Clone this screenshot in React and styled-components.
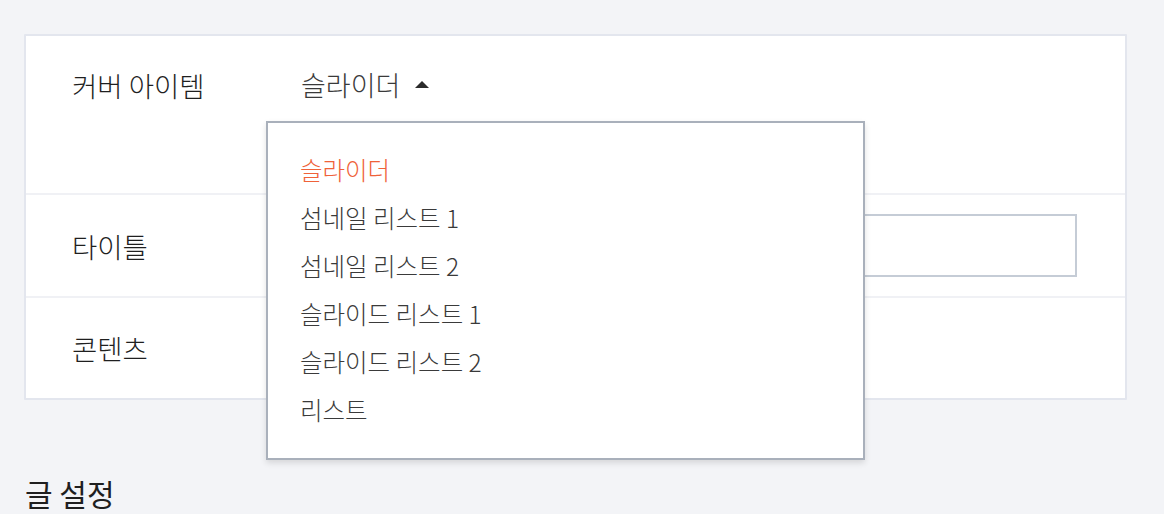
import React from "react";
import styled, { createGlobalStyle } from "styled-components";

const Global = createGlobalStyle`
  html, body {
    margin: 0;
    padding: 0;
    background: #f3f4f7;
    font-family: "Noto Sans CJK KR", "Noto Sans", sans-serif;
  }
`;

const Page = styled.div`
  padding: 34px 37px 0 24px;
`;

const Card = styled.div`
  background: #fff;
  border: 2px solid #e3e6ee;
  border-radius: 1px;
`;

const Row = styled.div`
  display: flex;
  align-items: ${(p) => (p.top ? "flex-start" : "center")};
  height: ${(p) => p.h}px;
  box-sizing: border-box;
  padding: ${(p) => (p.top ? "29px" : "0")} 48px 0 46px;
  border-top: ${(p) => (p.first ? "none" : "2px solid #f0f1f5")};
`;

const Label = styled.div`
  width: 229px;
  flex-shrink: 0;
  font-size: 27.5px;
  line-height: 40px;
  font-weight: 300;
  color: #1f1f1f;
`;

const SelectWrap = styled.div`
  position: relative;
`;

const Value = styled.button`
  display: flex;
  align-items: center;
  gap: 15px;
  border: none;
  background: none;
  padding: 0;
  font-family: inherit;
  font-size: 27px;
  line-height: 40px;
  font-weight: 300;
  color: #3a3a3a;
  cursor: pointer;
`;

const Caret = styled.span`
  width: 0;
  height: 0;
  margin-top: -2px;
  border-left: 7px solid transparent;
  border-right: 7px solid transparent;
  border-bottom: 7px solid #2b2b2b;
`;

const Menu = styled.ul`
  position: absolute;
  top: 56px;
  left: -35px;
  width: 599px;
  margin: 0;
  padding: 23px 0 24px 32px;
  list-style: none;
  box-sizing: border-box;
  background: #fff;
  border: 2px solid #a9b0bb;
  box-shadow: 0 3px 6px rgba(0, 0, 0, 0.12);
  z-index: 5;
`;

const Item = styled.li`
  height: 48px;
  line-height: 48px;
  font-size: 24.5px;
  font-weight: 300;
  color: ${(p) => (p.active ? "#ef6239" : "#3a3a3a")};
`;

const Input = styled.input`
  flex: 1;
  height: 63px;
  box-sizing: border-box;
  border: 2px solid #c5ccd6;
  background: #fff;
  outline: none;
`;

const Heading = styled.h2`
  margin: 71px 0 0 1px;
  font-size: 30px;
  font-weight: 400;
  color: #1f1f1f;
`;

const options = ["슬라이더", "섬네일 리스트 1", "섬네일 리스트 2", "슬라이드 리스트 1", "슬라이드 리스트 2", "리스트"];

export default function App() {
  return (
    <>
      <Global />
      <Page>
        <Card>
          <Row first top h={157}>
            <Label>커버 아이템</Label>
            <SelectWrap>
              <Value>
                슬라이더 <Caret />
              </Value>
              <Menu>
                {options.map((o, i) => (
                  <Item key={o} active={i === 0}>
                    {o}
                  </Item>
                ))}
              </Menu>
            </SelectWrap>
          </Row>
          <Row h={103}>
            <Label>타이틀</Label>
            <Input />
          </Row>
          <Row h={102}>
            <Label>콘텐츠</Label>
          </Row>
        </Card>
        <Heading>글 설정</Heading>
      </Page>
    </>
  );
}
